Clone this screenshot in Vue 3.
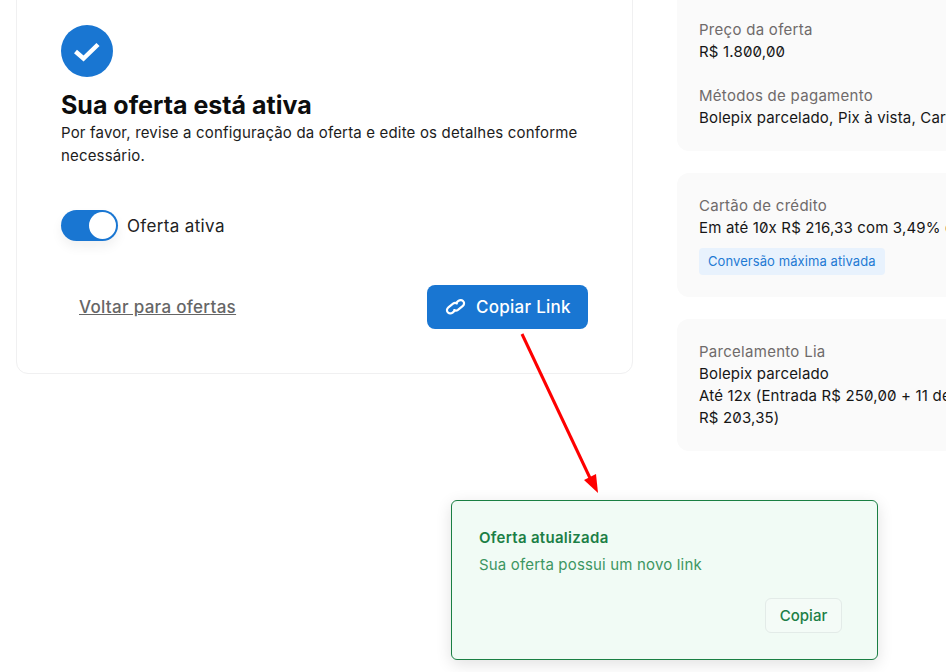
<template>
  <div class="page">
    <div class="columns">
      <section class="main-card">
        <div class="check-circle">
          <svg width="28" height="28" viewBox="0 0 28 28">
            <path d="M2.5 14.5 L10.5 21.5 L25 7.5" fill="none" stroke="#fff" stroke-width="4.5" />
          </svg>
        </div>
        <h1>Sua oferta está ativa</h1>
        <p class="intro">Por favor, revise a configuração da oferta e edite os detalhes conforme necessário.</p>
        <div class="toggle-row">
          <span class="toggle"><span class="knob"></span></span>
          <span>Oferta ativa</span>
        </div>
        <div class="actions">
          <a class="back-link">Voltar para ofertas</a>
          <button class="copy-link">
            <svg width="21" height="17.5" viewBox="0 0 24 20" fill="none" stroke="#fff" stroke-width="2.5" stroke-linecap="round">
              <path d="M13.5 6.2 C12 5.4 10.4 5.6 9.2 6.5 L3.9 10.7 C2 12.2 1.7 14.6 3 16.2 C4.3 17.9 6.8 18.1 8.7 16.6 L10.6 15.1" />
              <path d="M10.5 13.8 C12 14.6 13.6 14.4 14.8 13.5 L20.1 9.3 C22 7.8 22.3 5.4 21 3.8 C19.7 2.1 17.2 1.9 15.3 3.4 L13.4 4.9" />
            </svg>
            Copiar Link
          </button>
        </div>
      </section>

      <aside class="side">
        <div class="info-card first">
          <div class="label">Preço da oferta</div>
          <div class="value">R$ 1.800,00</div>
          <div class="label spaced">Métodos de pagamento</div>
          <div class="value nowrap">Bolepix parcelado, Pix à vista, Cartão de crédito</div>
        </div>
        <div class="info-card second">
          <div class="label">Cartão de crédito</div>
          <div class="value nowrap">Em até 10x R$ 216,33 com 3,49% de taxa</div>
          <span class="tag">Conversão máxima ativada</span>
        </div>
        <div class="info-card third">
          <div class="label">Parcelamento Lia</div>
          <div class="value">Bolepix parcelado</div>
          <div class="value nowrap">Até 12x (Entrada R$ 250,00 + 11 de</div>
          <div class="value">R$ 203,35)</div>
        </div>
      </aside>
    </div>

    <svg class="arrow" width="946" height="672" viewBox="0 0 946 672">
      <line x1="522" y1="334" x2="590" y2="478" stroke="#fe0000" stroke-width="3" />
      <polygon points="598,493 584,480 596,474" fill="#fe0000" />
    </svg>

    <div class="toast">
      <div class="toast-title">Oferta atualizada</div>
      <div class="toast-text">Sua oferta possui um novo link</div>
      <div class="toast-actions">
        <button class="toast-copy">Copiar</button>
      </div>
    </div>
  </div>
</template>

<script setup>
</script>

<style>
html,
body {
  margin: 0;
  background: #fff;
}
</style>

<style scoped>
.page {
  position: relative;
  width: 946px;
  height: 672px;
  overflow: hidden;
  font-family: Inter, "Noto Sans", sans-serif;
  font-feature-settings: "zero";
  color: #111;
  background: #fff;
}

.columns {
  display: flex;
  align-items: flex-start;
  gap: 44px;
  margin-top: -20px;
  padding-left: 16px;
}

.main-card {
  flex: none;
  box-sizing: border-box;
  width: 617px;
  height: 394px;
  padding: 44px 44px 0;
  border: 1px solid #f0f0f1;
  border-radius: 12px;
}

.check-circle {
  display: flex;
  align-items: center;
  justify-content: center;
  width: 52px;
  height: 52px;
  border-radius: 50%;
  background: #1976d2;
}

h1 {
  margin: 12px 0 0;
  font-size: 25px;
  line-height: 32px;
  font-weight: 700;
  color: #0d0d0d;
}

.intro {
  margin: 0;
  font-size: 15px;
  line-height: 23px;
  letter-spacing: 0.17px;
  color: #1c1c1c;
}

.toggle-row {
  display: flex;
  align-items: center;
  gap: 9px;
  margin-top: 43px;
  font-size: 17px;
  letter-spacing: 0.35px;
  color: #222;
}

.toggle {
  display: flex;
  justify-content: flex-end;
  align-items: center;
  box-sizing: border-box;
  width: 57px;
  height: 31px;
  padding-right: 2px;
  border-radius: 16px;
  background: #1976d2;
  box-shadow: 0 6px 12px rgba(0, 0, 0, 0.06);
}

.knob {
  width: 27px;
  height: 27px;
  border-radius: 50%;
  background: #fff;
}

.actions {
  display: flex;
  align-items: center;
  justify-content: space-between;
  margin-top: 44px;
  padding: 0 0 0 18px;
}

.back-link {
  font-size: 17px;
  letter-spacing: 0.3px;
  font-weight: 500;
  color: #666;
  text-decoration: underline;
}

.copy-link {
  display: flex;
  align-items: center;
  gap: 10px;
  box-sizing: border-box;
  width: 161px;
  height: 44px;
  padding: 0 0 0 18px;
  border: none;
  border-radius: 8px;
  background: #1976d2;
  color: #fff;
  font: inherit;
  font-size: 17px;
  letter-spacing: 0.27px;
  font-weight: 500;
}

.side {
  display: flex;
  flex: none;
  flex-direction: column;
  gap: 22px;
  width: 320px;
}

.info-card {
  box-sizing: border-box;
  padding: 22px 22px 22px;
  border-radius: 12px;
  background: #fafafa;
  font-size: 15px;
  line-height: 22px;
  letter-spacing: 0.17px;
}

.first {
  padding-top: 39px;
}

.label {
  letter-spacing: 0.28px;
  color: #6f6a6a;
}

.spaced {
  margin-top: 22px;
}

.value {
  color: #161616;
}

.nowrap {
  white-space: nowrap;
}

.tag {
  display: inline-block;
  margin-top: 9px;
  padding: 3px 9px;
  border-radius: 4px;
  background: #e8f2fd;
  color: #1f7ad4;
  font-size: 13px;
  line-height: 21px;
  letter-spacing: 0.08px;
}

.arrow {
  position: absolute;
  top: 0;
  left: 0;
  pointer-events: none;
}

.toast {
  position: absolute;
  top: 500px;
  left: 451px;
  box-sizing: border-box;
  width: 427px;
  height: 160px;
  padding: 27px 35px 0 27px;
  border: 1px solid #1a7f43;
  border-radius: 6px;
  background: #f1fbf5;
  box-shadow: 0 4px 16px rgba(0, 0, 0, 0.12);
}

.toast-title {
  font-size: 15px;
  line-height: 20px;
  letter-spacing: 0.3px;
  font-weight: 600;
  color: #1c7f46;
}

.toast-text {
  margin-top: 7px;
  font-size: 15px;
  line-height: 20px;
  letter-spacing: 0.17px;
  color: #3d9662;
}

.toast-actions {
  display: flex;
  justify-content: flex-end;
  margin-top: 23px;
}

.toast-copy {
  box-sizing: border-box;
  width: 77px;
  height: 35px;
  border: 1px solid #e3ebe8;
  border-radius: 6px;
  background: #f4fbf7;
  color: #1c7f46;
  font: inherit;
  font-size: 15px;
  font-weight: 500;
}
</style>
